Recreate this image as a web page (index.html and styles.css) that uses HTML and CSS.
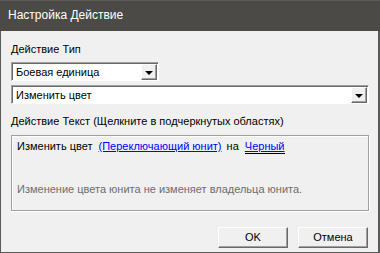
FILE: index.html
```html
<!DOCTYPE html>
<html>
<head>
<meta charset="utf-8">
<link rel="stylesheet" href="styles.css">
</head>
<body>
<div class="dialog">
  <div class="titlebar">Настройка Действие</div>
  <div class="content">
    <div class="label label-type">Действие Тип</div>
    <div class="combo combo-short">
      <div class="combo-field">Боевая единица</div>
      <div class="combo-btn"><span class="arrow"></span></div>
    </div>
    <div class="combo combo-wide">
      <div class="combo-field">Изменить цвет</div>
      <div class="combo-btn"><span class="arrow"></span></div>
    </div>
    <div class="label label-text">Действие Текст (Щелкните в подчеркнутых областях)</div>
    <div class="textbox">
      <div class="sentence">Изменить цвет <a class="link">(Переключающий юнит)</a> на <a class="link link-focus">Черный</a></div>
      <div class="hint">Изменение цвета юнита не изменяет владельца юнита.</div>
    </div>
    <div class="buttons">
      <div class="btn">OK</div>
      <div class="btn">Отмена</div>
    </div>
  </div>
</div>
</body>
</html>
```
FILE: styles.css
```css
html, body {
  margin: 0;
  padding: 0;
  background: #f0f0f0;
}
.dialog {
  width: 380px;
  height: 253px;
  box-sizing: border-box;
  border-left: 1px solid #5a5a5a;
  border-right: 2px solid #5a5a5a;
  border-bottom: 1px solid #5a5a5a;
  background: #f0f0f0;
  display: flex;
  flex-direction: column;
  font-family: "Liberation Sans", Arial, sans-serif;
  font-size: 11px;
  color: #000;
}
.titlebar {
  height: 31px;
  flex: none;
  background: #4b4a47;
  border-top: 1px solid #5c5b58;
  box-sizing: border-box;
  color: #fff;
  font-family: "Liberation Sans", Arial, sans-serif;
  font-size: 12px;
  line-height: 29px;
  padding-left: 8px;
  margin-left: -1px;
  margin-right: -2px;
}
.content {
  flex: 1;
  padding: 0 9px 0 10px;
  display: flex;
  flex-direction: column;
}
.label {
  line-height: 13px;
  height: 13px;
}
.label-type {
  margin-top: 12px;
}
.label-text {
  margin-top: 11px;
}
.combo {
  height: 19px;
  box-sizing: border-box;
  background: #fff;
  border-top: 1px solid #a0a0a0;
  border-left: 1px solid #a0a0a0;
  border-right: 1px solid #fff;
  border-bottom: 1px solid #fff;
  box-shadow: inset 1px 1px 0 #696969;
  display: flex;
  align-items: stretch;
  padding: 1px 1px 0 1px;
}
.combo-short {
  width: 148px;
  margin-top: 6px;
}
.combo-wide {
  width: 358px;
  margin-top: 4px;
}
.combo-field {
  flex: 1;
  padding-left: 3px;
  line-height: 16px;
  white-space: nowrap;
}
.combo-btn {
  width: 16px;
  flex: none;
  box-sizing: border-box;
  background: #f0f0f0;
  border-top: 1px solid #fff;
  border-left: 1px solid #fff;
  border-right: 1px solid #696969;
  border-bottom: 1px solid #696969;
  box-shadow: inset -1px -1px 0 #a0a0a0;
  display: flex;
  align-items: center;
  justify-content: center;
}
.arrow {
  width: 0;
  height: 0;
  border-left: 4px solid transparent;
  border-right: 4px solid transparent;
  border-top: 4px solid #000;
  margin-top: 1px;
}
.textbox {
  margin-top: 7px;
  width: 358px;
  height: 76px;
  box-sizing: border-box;
  border: 1px solid #a0a0a0;
  box-shadow: 1px 1px 0 #fff, inset 1px 1px 0 #fff;
  padding: 3px 5px 0 5px;
}
.sentence {
  line-height: 14px;
  white-space: nowrap;
}
.link {
  color: #0000ff;
  text-decoration: underline;
  margin-left: 3px;
  margin-right: 2px;
}
.link-focus {
  border-bottom: 1px solid #000;
  padding-bottom: 1px;
}
.hint {
  margin-top: 29px;
  color: #6d6d6d;
  line-height: 14px;
}
.buttons {
  margin-top: 16px;
  display: flex;
  justify-content: flex-end;
  gap: 10px;
  padding-right: 1px;
}
.btn {
  width: 70px;
  height: 21px;
  box-sizing: border-box;
  background: #f0f0f0;
  border-top: 1px solid #fff;
  border-left: 1px solid #fff;
  border-right: 1px solid #696969;
  border-bottom: 1px solid #696969;
  box-shadow: inset -1px -1px 0 #a0a0a0;
  text-align: center;
  line-height: 19px;
  font-size: 11px;
}
```
